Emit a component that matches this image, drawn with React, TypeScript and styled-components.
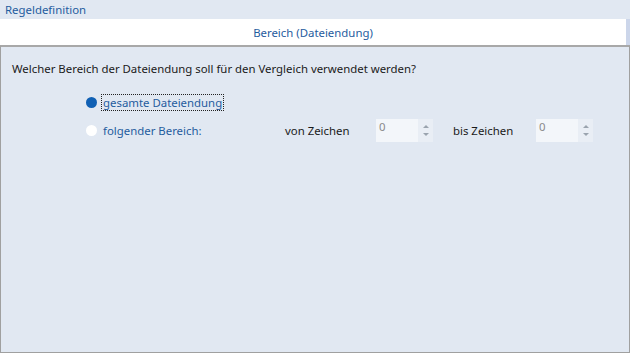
import { createGlobalStyle, styled } from 'styled-components';

const GlobalStyle = createGlobalStyle`
  html, body {
    margin: 0;
    padding: 0;
    background: #e1e8f2;
  }
  body {
    font-family: 'Noto Sans', 'Open Sans', sans-serif;
    font-size: 11.4px;
  }
`;

const Window = styled.div`
  width: 630px;
  height: 353px;
  display: flex;
  flex-direction: column;
  background: #e1e8f2;
`;

const TitleBar = styled.div`
  height: 18px;
  padding-left: 5px;
  display: flex;
  align-items: center;
  color: #1f5c9e;
`;

const TabStrip = styled.div`
  height: 26px;
  margin-top: 1px;
  display: flex;
`;

const Tab = styled.div`
  flex: 1;
  background: #ffffff;
  color: #1f5c9e;
  display: flex;
  align-items: center;
  justify-content: center;
  padding-top: 1px;
`;

const TabEdge = styled.div`
  width: 4px;
  background: #ccd6ea;
`;

const Panel = styled.div`
  flex: 1;
  border: 1px solid #a0a0a0;
  border-top: 2px solid #a8a8a8;
  padding: 14px 11px;
`;

const Question = styled.div`
  color: #1a1a1a;
`;

const Options = styled.div`
  margin-top: 15px;
  padding-left: 74px;
  display: flex;
  flex-direction: column;
  gap: 6px;
`;

const OptionRow = styled.div`
  display: flex;
  align-items: center;
  height: 22px;
`;

const Radio = styled.span<{ $checked?: boolean }>`
  width: 11px;
  height: 11px;
  border-radius: 50%;
  background: ${(p) => (p.$checked ? '#1060b4' : '#ffffff')};
  margin-right: 5px;
  flex-shrink: 0;
`;

const Label = styled.span<{ $focused?: boolean; $width?: number }>`
  color: #1f5c9e;
  outline: ${(p) => (p.$focused ? '1px dotted #222' : 'none')};
  padding: 0 1px;
  ${(p) => (p.$width ? `width: ${p.$width}px;` : '')}
`;

const RangeLabel = styled.span<{ $width: number; $indent?: number }>`
  box-sizing: border-box;
  color: #1a1a1a;
  width: ${(p) => p.$width}px;
  padding-left: ${(p) => p.$indent ?? 0}px;
`;

const Spinner = styled.div`
  width: 57px;
  height: 23px;
  display: flex;
  background: #f3f6fa;
`;

const SpinValue = styled.div`
  flex: 1;
  color: #8a8a8a;
  padding: 0 0 2px 3px;
`;

const SpinButtons = styled.div`
  width: 15px;
  display: flex;
  flex-direction: column;
  align-items: center;
  justify-content: center;
  gap: 5px;
  background: #e9eef5;
`;

const Arrow = styled.span<{ $down?: boolean }>`
  width: 0;
  height: 0;
  border-left: 3px solid transparent;
  border-right: 3px solid transparent;
  ${(p) =>
    p.$down ? 'border-top: 3px solid #9aa3ae;' : 'border-bottom: 3px solid #9aa3ae;'}
`;

const NumberSpinner = ({ value }: { value: number }) => (
  <Spinner>
    <SpinValue>{value}</SpinValue>
    <SpinButtons>
      <Arrow />
      <Arrow $down />
    </SpinButtons>
  </Spinner>
);

const App = () => {
  return (
    <Window>
      <GlobalStyle />
      <TitleBar>Regeldefinition</TitleBar>
      <TabStrip>
        <Tab>Bereich (Dateiendung)</Tab>
        <TabEdge />
      </TabStrip>
      <Panel>
        <Question>
          Welcher Bereich der Dateiendung soll für den Vergleich verwendet werden?
        </Question>
        <Options>
          <OptionRow>
            <Radio $checked />
            <Label $focused>gesamte Dateiendung</Label>
          </OptionRow>
          <OptionRow>
            <Radio />
            <Label $width={181}>folgender Bereich:</Label>
            <RangeLabel $width={91}>von Zeichen</RangeLabel>
            <NumberSpinner value={0} />
            <RangeLabel $width={103} $indent={20}>
              bis Zeichen
            </RangeLabel>
            <NumberSpinner value={0} />
          </OptionRow>
        </Options>
      </Panel>
    </Window>
  );
};

export default App;
